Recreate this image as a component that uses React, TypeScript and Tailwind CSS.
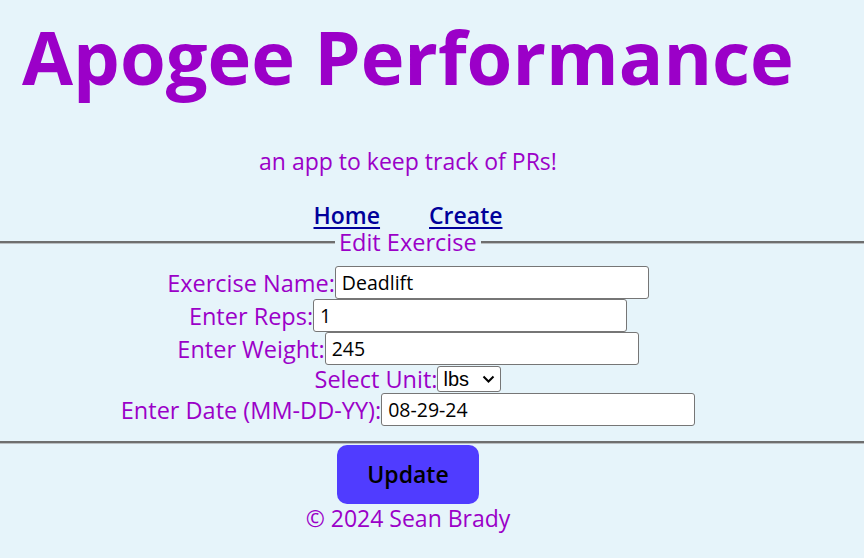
import React from "react";

const purple = "text-[#9b00c8]";

function Row({ label, value, h = "h-[33px]" }: { label: string; value: string; h?: string }) {
  return (
    <div className={`flex ${h} items-center justify-center`}>
      <span className={`${purple} text-[23.5px] leading-[28px]`}>{label}</span>
      <input
        readOnly
        value={value}
        className="h-[33px] w-[314px] rounded-[3px] border border-[#767676] bg-white pl-[6px] text-[19.5px] text-black font-['Open_Sans',sans-serif] outline-none"
      />
    </div>
  );
}

function Line({ className = "" }: { className?: string }) {
  return (
    <div className={`flex flex-col ${className}`}>
      <div className="h-[2px] bg-[#6e6e6e]" />
      <div className="h-[1px] bg-[#b9bec1]" />
    </div>
  );
}

export default function App() {
  return (
    <div className="h-[558px] w-[864px] overflow-hidden bg-[#e6f4fa] font-['Open_Sans',sans-serif]">
      <h1 className={`${purple} h-[112px] pl-[22px] text-[74px] font-bold leading-[114px]`}>Apogee Performance</h1>
      <div className="w-[816px] text-center">
        <p className={`${purple} mt-[34px] h-[30px] text-[23px] leading-[30px]`}>an app to keep track of PRs!</p>
        <nav className="mt-[26px] mb-[2px] flex h-[26px] items-center justify-center gap-[49px] text-[23px] leading-[26px] font-semibold">
          <a href="#" className="text-[#00009a] underline underline-offset-[3px] decoration-[2px]">Home</a>
          <a href="#" className="text-[#00009a] underline underline-offset-[3px] decoration-[2px]">Create</a>
        </nav>
      </div>
      <div className="flex h-[25px] w-[864px] items-center">
        <Line className="w-[335px]" />
        <span className={`${purple} px-[4px] text-[23.5px] leading-[25px]`}>Edit Exercise</span>
        <Line className="flex-1" />
      </div>
      <div className="mt-[11px] w-[816px]">
        <Row label="Exercise Name:" value="Deadlift" />
        <Row label="Enter Reps:" value="1" />
        <Row label="Enter Weight:" value="245" />
        <div className="flex h-[28px] items-center justify-center">
          <span className={`${purple} text-[23.5px] leading-[28px]`}>Select Unit:</span>
          <div className="relative h-[26px] w-[64px]">
            <select
              defaultValue="lbs"
              className="h-[26px] w-[64px] appearance-none rounded-[3px] border border-[#767676] bg-white pl-[5px] text-[20px] leading-[24px] text-black font-['Liberation_Sans',sans-serif]"
            >
              <option value="lbs">lbs</option>
              <option value="kg">kg</option>
            </select>
            <svg
              className="pointer-events-none absolute right-[6px] top-[9px]"
              width="13"
              height="8"
              viewBox="0 0 13 8"
              fill="none"
            >
              <path d="M1.5 1.5 L6.5 6.5 L11.5 1.5" stroke="black" strokeWidth="2" />
            </svg>
          </div>
        </div>
        <Row label="Enter Date (MM-DD-YY):" value="08-29-24" />
      </div>
      <Line className="mt-[15px] w-[864px]" />
      <div className="flex w-[816px] flex-col items-center">
        <button className="mt-[1px] h-[59px] w-[142px] rounded-[10px] bg-[#503cff] text-[23px] font-semibold text-black">
          Update
        </button>
        <p className={`${purple} h-[28px] text-[23px] leading-[28px]`}>© 2024 Sean Brady</p>
      </div>
    </div>
  );
}
